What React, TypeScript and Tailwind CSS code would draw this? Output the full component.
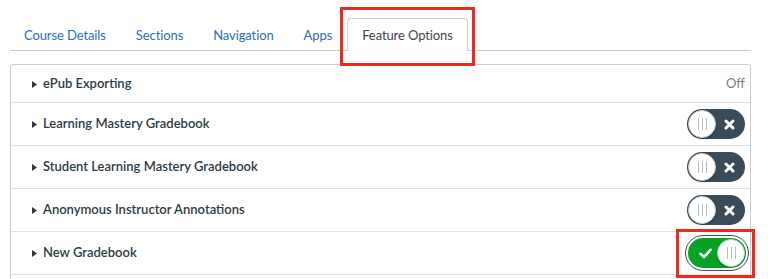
import type React from "react";

const tabs = ["Course Details", "Sections", "Navigation", "Apps"];

interface IFeatureRowProps {
	title: string;
	state: "text" | "off" | "on";
	first?: boolean;
}

const Knob: React.FC = (): React.JSX.Element => (
	<span className="w-[28px] h-[28px] rounded-full bg-white border border-[#c7cdd1] flex items-center justify-center gap-[3px] shadow-[0_1px_2px_rgba(0,0,0,0.25)]">
		<span className="w-px h-[12px] bg-[#b5bcc2]" />
		<span className="w-px h-[12px] bg-[#b5bcc2]" />
		<span className="w-px h-[12px] bg-[#b5bcc2]" />
	</span>
);

const Toggle: React.FC<{ on: boolean }> = ({ on }): React.JSX.Element => {
	if (on) {
		return (
			<span className="rounded-full border-[1.5px] border-[#394b58] p-[2px] mr-[-4px]">
				<span className="w-[58px] h-[30px] rounded-full bg-[#08a324] flex items-center justify-between pl-[11px] pr-px">
					<svg width="13" height="11" viewBox="0 0 13 11">
						<path d="M1.5 5.8 L5 9 L11.5 1.8" fill="none" stroke="white" strokeWidth="2.6" strokeLinecap="round" strokeLinejoin="round" />
					</svg>
					<Knob />
				</span>
			</span>
		);
	}
	return (
		<span className="w-[58px] h-[30px] rounded-full bg-[#394b58] flex items-center justify-between pl-px pr-[10px]">
			<Knob />
			<svg width="11" height="11" viewBox="0 0 11 11">
				<path d="M2 2 L9 9 M9 2 L2 9" stroke="white" strokeWidth="3" strokeLinecap="round" />
			</svg>
		</span>
	);
};

const FeatureRow: React.FC<IFeatureRowProps> = ({ title, state, first }): React.JSX.Element => {
	return (
		<div
			className={
				first
					? "h-[38px] border-b border-[#dfe2e5] flex items-center pl-[21px] pr-[5px]"
					: "h-[43px] border-b border-[#dfe2e5] flex items-center pl-[21px] pr-[5px]"
			}
		>
			<svg width="5" height="7" viewBox="0 0 5 7" className="mr-[6px] mt-px">
				<path d="M0 0 L5 3.5 L0 7 Z" fill="#2d3b45" />
			</svg>
			<span className="text-[13px] font-semibold text-[#2d3b45] flex-1">{title}</span>
			{state === "text" && <span className="text-[13px] text-[#73818c]">Off</span>}
			{state === "off" && <Toggle on={false} />}
			{state === "on" && <Toggle on />}
		</div>
	);
};

export default function App(): React.JSX.Element {
	return (
		<div className="w-[768px] h-[279px] bg-white overflow-hidden relative" style={{ fontFamily: "Lato, 'Liberation Sans', sans-serif" }}>
			<div className="pt-[18px] pl-[10px] pr-[17px]">
				<div className="flex items-end border-b border-[#c7cdd1] h-[33px]">
					{tabs.map((tab) => (
						<span key={tab} className="px-[15px] pt-[3px] h-[32px] flex items-center text-[13px] text-[#2b6fb8] first:ml-[-1px] tracking-[-0.1px]">
							{tab}
						</span>
					))}
					<span className="px-[14px] pt-[2px] h-[33px] mb-[-1px] flex items-center text-[13px] text-[#3d464d] bg-white border border-b-0 border-[#c7cdd1] rounded-t-[4px] tracking-[-0.1px]">
						Feature Options
					</span>
				</div>
			</div>
			<div className="mt-[13px] ml-[10px] mr-[17px] border border-b-0 border-[#c7cdd1] rounded-t-[4px]">
				<FeatureRow title="ePub Exporting" state="text" first />
				<FeatureRow title="Learning Mastery Gradebook" state="off" />
				<FeatureRow title="Student Learning Mastery Gradebook" state="off" />
				<FeatureRow title="Anonymous Instructor Annotations" state="off" />
				<FeatureRow title="New Gradebook" state="on" />
				<div className="h-[10px]" />
			</div>
			<div className="absolute left-[340px] top-[7px] w-[135px] h-[59px] border-[3px] border-[#ec2a1e]" />
			<div className="absolute left-[676px] top-[229px] w-[79px] h-[49px] border-[3px] border-[#ec2a1e]" />
		</div>
	);
}
